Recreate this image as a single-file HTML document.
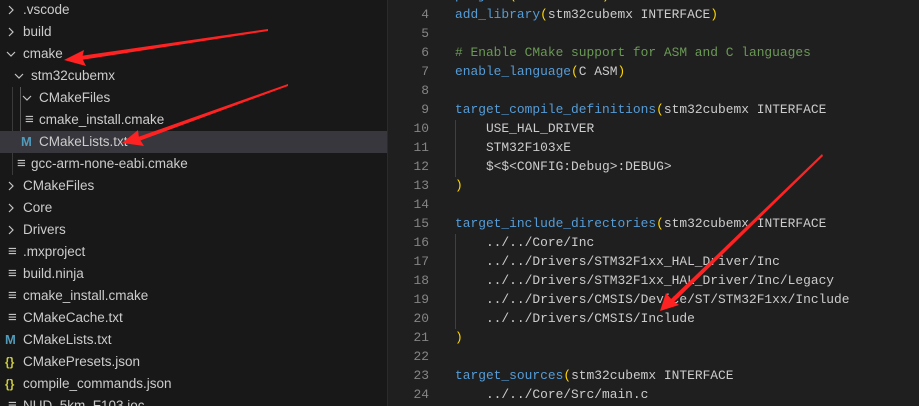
<!DOCTYPE html>
<html style="overflow:hidden;height:406px"><head><meta charset="utf-8"><style>
body{margin:0;width:919px;height:406px;overflow:hidden;background:#1f1f1f;position:relative;font-family:"Liberation Sans",sans-serif}
#side{position:absolute;left:0;top:0;width:387px;height:406px;background:#181818;border-right:1px solid #2b2b2b;overflow:hidden}
.r{position:absolute;left:0;width:387px;height:22px;line-height:22px;font-size:13.5px;color:#cccccc;white-space:nowrap}
.r span,.r svg{position:absolute}
.r svg{top:6px}
.sel{background:#37373d}
.ic{color:#c5c5c5;font-size:15px}
.m{color:#519aba;font-weight:bold;font-size:13px}
.j{color:#cbcb41;font-weight:bold;font-size:12px}
#ed{position:absolute;left:388px;top:0;right:0;height:406px;font-family:"Liberation Mono",monospace;font-size:12.9px;overflow:hidden}
.l{position:absolute;left:0;height:19px;line-height:19px;white-space:pre;width:531px}
.n{position:absolute;right:490px;color:#858585;text-align:right}
.c{position:absolute;left:67px;color:#cccccc}
.f{color:#569cd6}.p{color:#ffd700}.cm{color:#6a9955}
</style></head><body>
<svg width="0" height="0" style="position:absolute"><defs>
<symbol id="cr" viewBox="0 0 10 10"><path d="M3 1 L7 5 L3 9" fill="none" stroke="#c5c5c5" stroke-width="1.2"/></symbol>
<symbol id="cd" viewBox="0 0 10 10"><path d="M1 3 L5 7 L9 3" fill="none" stroke="#c5c5c5" stroke-width="1.2"/></symbol>
</defs></svg>
<div id="side">
<div style="position:absolute;left:20px;top:87px;width:1px;height:66px;background:#585858"></div>
<div style="position:absolute;left:12px;top:87px;width:1px;height:88px;background:#3a3a3a"></div>
<div class="r" style="top:-1px"><svg width="10" height="10" style="left:6px"><use href="#cr"/></svg><span style="left:23px">.vscode</span></div>
<div class="r" style="top:21px"><svg width="10" height="10" style="left:6px"><use href="#cr"/></svg><span style="left:23px">build</span></div>
<div class="r" style="top:43px"><svg width="10" height="10" style="left:6px"><use href="#cd"/></svg><span style="left:23px">cmake</span></div>
<div class="r" style="top:65px"><svg width="10" height="10" style="left:14px"><use href="#cd"/></svg><span style="left:31px">stm32cubemx</span></div>
<div class="r" style="top:87px"><svg width="10" height="10" style="left:22px"><use href="#cd"/></svg><span style="left:39px">CMakeFiles</span></div>
<div class="r" style="top:109px"><span class="ic" style="left:25px">&#8801;</span><span style="left:39px">cmake_install.cmake</span></div>
<div class="r sel" style="top:131px"><span class="m" style="left:21px">M</span><span style="left:39px">CMakeLists.txt</span></div>
<div class="r" style="top:153px"><span class="ic" style="left:17px">&#8801;</span><span style="left:31px">gcc-arm-none-eabi.cmake</span></div>
<div class="r" style="top:175px"><svg width="10" height="10" style="left:6px"><use href="#cr"/></svg><span style="left:23px">CMakeFiles</span></div>
<div class="r" style="top:197px"><svg width="10" height="10" style="left:6px"><use href="#cr"/></svg><span style="left:23px">Core</span></div>
<div class="r" style="top:219px"><svg width="10" height="10" style="left:6px"><use href="#cr"/></svg><span style="left:23px">Drivers</span></div>
<div class="r" style="top:241px"><span class="ic" style="left:8px">&#8801;</span><span style="left:23px">.mxproject</span></div>
<div class="r" style="top:263px"><span class="ic" style="left:8px">&#8801;</span><span style="left:23px">build.ninja</span></div>
<div class="r" style="top:285px"><span class="ic" style="left:8px">&#8801;</span><span style="left:23px">cmake_install.cmake</span></div>
<div class="r" style="top:307px"><span class="ic" style="left:8px">&#8801;</span><span style="left:23px">CMakeCache.txt</span></div>
<div class="r" style="top:329px"><span class="m" style="left:5px">M</span><span style="left:23px">CMakeLists.txt</span></div>
<div class="r" style="top:351px"><span class="j" style="left:5px">{}</span><span style="left:23px">CMakePresets.json</span></div>
<div class="r" style="top:373px"><span class="j" style="left:5px">{}</span><span style="left:23px">compile_commands.json</span></div>
<div class="r" style="top:395px"><span class="ic" style="left:8px">&#8801;</span><span style="left:23px">NUD_5km_F103.ioc</span></div>
</div>
<div id="ed">
<div style="position:absolute;left:67px;top:120px;width:1px;height:57px;background:#404040"></div>
<div style="position:absolute;left:67px;top:234px;width:1px;height:95px;background:#404040"></div>
<div class="l" style="top:-14px"><span class="n">3</span><span class="c"><span class="f">project</span><span class="p">(</span>stm32cubemx<span class="p">)</span></span></div>
<div class="l" style="top:5px"><span class="n">4</span><span class="c"><span class="f">add_library</span><span class="p">(</span>stm32cubemx INTERFACE<span class="p">)</span></span></div>
<div class="l" style="top:24px"><span class="n">5</span></div>
<div class="l" style="top:43px"><span class="n">6</span><span class="c cm"># Enable CMake support for ASM and C languages</span></div>
<div class="l" style="top:62px"><span class="n">7</span><span class="c"><span class="f">enable_language</span><span class="p">(</span>C ASM<span class="p">)</span></span></div>
<div class="l" style="top:81px"><span class="n">8</span></div>
<div class="l" style="top:100px"><span class="n">9</span><span class="c"><span class="f">target_compile_definitions</span><span class="p">(</span>stm32cubemx INTERFACE</span></div>
<div class="l" style="top:119px"><span class="n">10</span><span class="c">    USE_HAL_DRIVER</span></div>
<div class="l" style="top:138px"><span class="n">11</span><span class="c">    STM32F103xE</span></div>
<div class="l" style="top:157px"><span class="n">12</span><span class="c">    $&lt;$&lt;CONFIG:Debug&gt;:DEBUG&gt;</span></div>
<div class="l" style="top:176px"><span class="n">13</span><span class="c"><span class="p">)</span></span></div>
<div class="l" style="top:195px"><span class="n">14</span></div>
<div class="l" style="top:214px"><span class="n">15</span><span class="c"><span class="f">target_include_directories</span><span class="p">(</span>stm32cubemx INTERFACE</span></div>
<div class="l" style="top:233px"><span class="n">16</span><span class="c">    ../../Core/Inc</span></div>
<div class="l" style="top:252px"><span class="n">17</span><span class="c">    ../../Drivers/STM32F1xx_HAL_Driver/Inc</span></div>
<div class="l" style="top:271px"><span class="n">18</span><span class="c">    ../../Drivers/STM32F1xx_HAL_Driver/Inc/Legacy</span></div>
<div class="l" style="top:290px"><span class="n">19</span><span class="c">    ../../Drivers/CMSIS/Device/ST/STM32F1xx/Include</span></div>
<div class="l" style="top:309px"><span class="n">20</span><span class="c">    ../../Drivers/CMSIS/Include</span></div>
<div class="l" style="top:328px"><span class="n">21</span><span class="c"><span class="p">)</span></span></div>
<div class="l" style="top:347px"><span class="n">22</span></div>
<div class="l" style="top:366px"><span class="n">23</span><span class="c"><span class="f">target_sources</span><span class="p">(</span>stm32cubemx INTERFACE</span></div>
<div class="l" style="top:385px"><span class="n">24</span><span class="c">    ../../Core/Src/main.c</span></div>
</div>
<svg width="919" height="406" style="position:absolute;left:0;top:0">
<g fill="#f22" stroke="none">
<polygon points="268,29 80,56 81,60 268,31"/>
<polygon points="64,60 84,50 82,58 86,66"/>
<polygon points="288,84 138,137 139,141 288,86"/>
<polygon points="122,143 138,130 139,138 144,146"/>
<polygon points="822,154 670,300 673,303 823,156"/>
<polygon points="660,311 666,293 672,300 679,305"/>
</g>
</svg>
</body></html>
